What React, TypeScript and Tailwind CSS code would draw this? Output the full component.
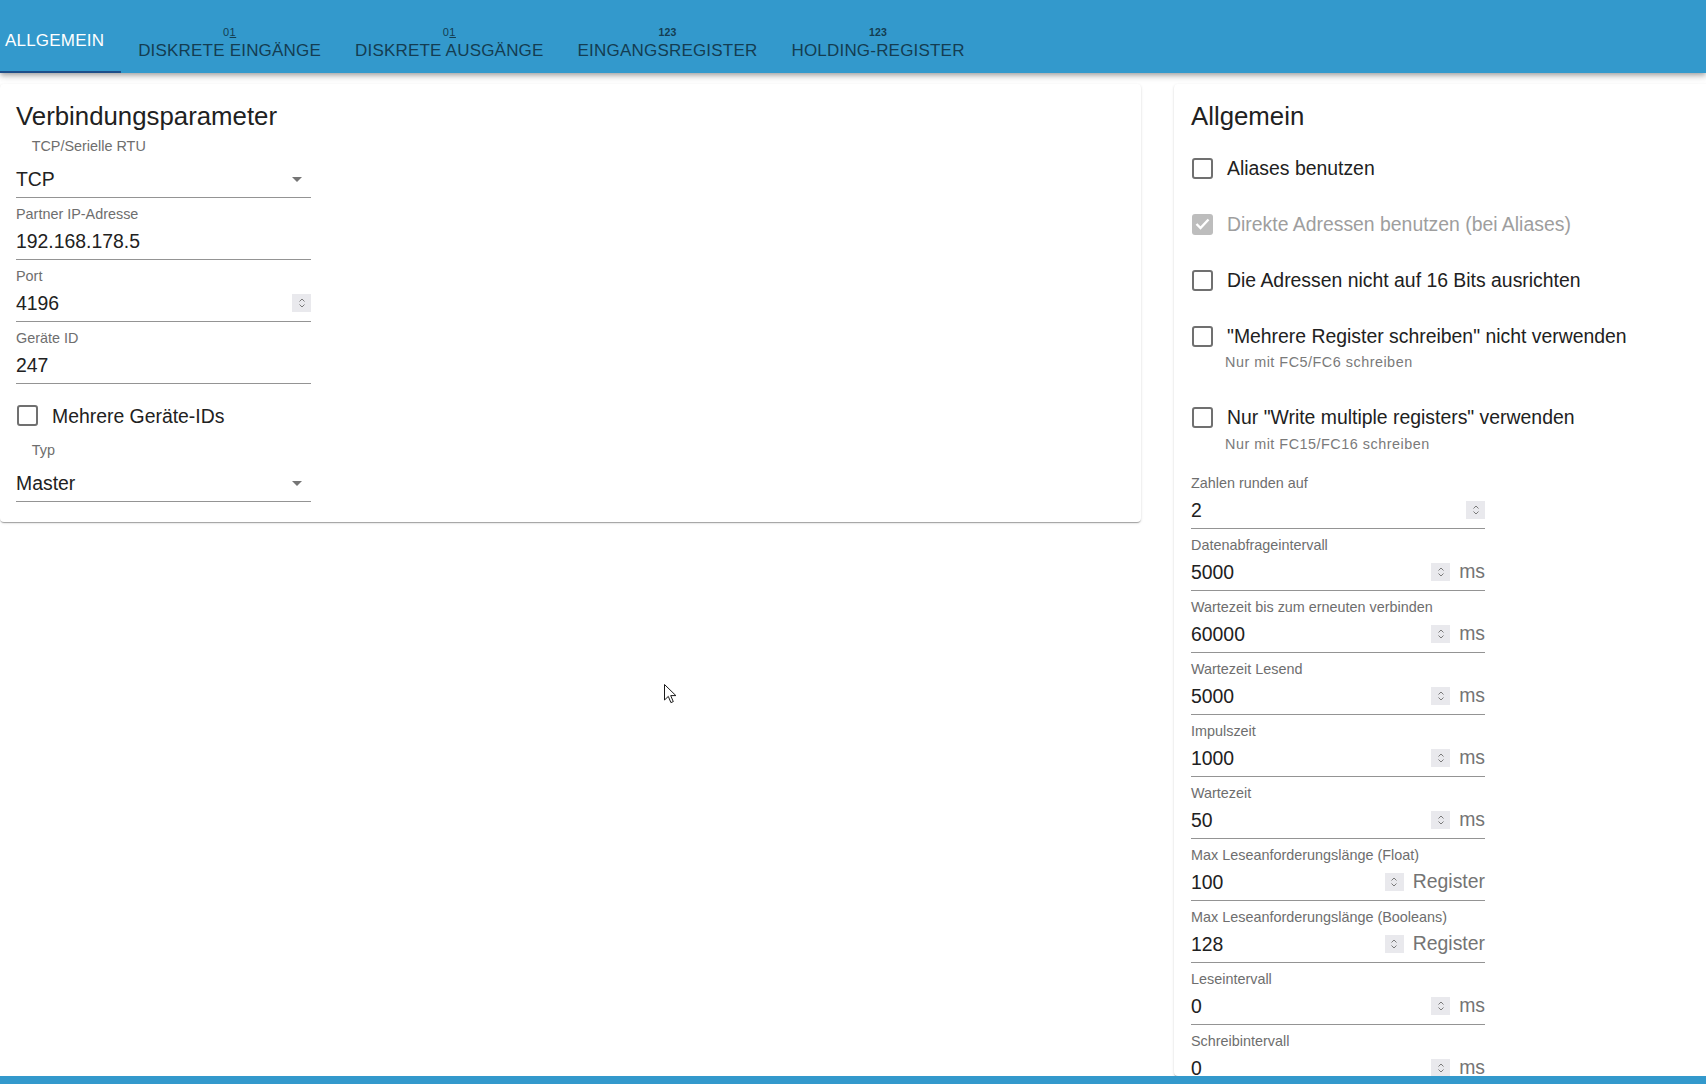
import React from "react";

const tabs = [
  { label: "Allgemein", icon: null },
  { label: "Diskrete Eingänge", icon: "bits" },
  { label: "Diskrete Ausgänge", icon: "bits" },
  { label: "Eingangsregister", icon: "num" },
  { label: "Holding-Register", icon: "num" },
];

const rightFields = [
  { label: "Zahlen runden auf", value: "2", unit: "" },
  { label: "Datenabfrageintervall", value: "5000", unit: "ms" },
  { label: "Wartezeit bis zum erneuten verbinden", value: "60000", unit: "ms" },
  { label: "Wartezeit Lesend", value: "5000", unit: "ms" },
  { label: "Impulszeit", value: "1000", unit: "ms" },
  { label: "Wartezeit", value: "50", unit: "ms" },
  { label: "Max Leseanforderungslänge (Float)", value: "100", unit: "Register" },
  { label: "Max Leseanforderungslänge (Booleans)", value: "128", unit: "Register" },
  { label: "Leseintervall", value: "0", unit: "ms" },
  { label: "Schreibintervall", value: "0", unit: "ms" },
];

const cardShadow =
  "shadow-[0_2px_1px_-1px_rgba(0,0,0,0.2),0_1px_1px_0_rgba(0,0,0,0.14),0_1px_3px_0_rgba(0,0,0,0.12)]";

const Spinner: React.FC = () => (
  <div className="w-[19px] h-[18px] bg-[#e9e9ed] flex items-center justify-center shrink-0">
    <svg width="8" height="12" viewBox="0 0 8 12" fill="none" stroke="#7a7a7a" strokeWidth="1">
      <path d="M1.5 4.5L4 2l2.5 2.5" />
      <path d="M1.5 7.5L4 10l2.5-2.5" />
    </svg>
  </div>
);

const Arrow: React.FC = () => (
  <svg width="10" height="5" viewBox="0 0 10 5" className="mr-[9px] mt-[2px]">
    <path d="M0 0h10L5 5z" fill="#757575" />
  </svg>
);

const Label: React.FC<{ text: string; indent?: boolean }> = ({ text, indent }) => (
  <div
    className={`h-[17px] leading-[17px] text-[14.4px] text-[#6e6e6e] whitespace-nowrap ${
      indent ? "pl-[15.7px]" : ""
    }`}
  >
    {text}
  </div>
);

const TextField: React.FC<{ label: string; value: string; spinner?: boolean; unit?: string }> = ({
  label,
  value,
  spinner,
  unit,
}) => (
  <div className="pt-[8px]">
    <Label text={label} />
    <div className="h-[37px] flex items-center border-b border-[#949494]">
      <div className="flex-1 text-[19.4px] leading-[36px] text-[#212121]">{value}</div>
      {spinner && <Spinner />}
      {unit && <div className="ml-[9px] text-[19.4px] text-[#747474]">{unit}</div>}
    </div>
  </div>
);

const SelectField: React.FC<{ label: string; value: string; className?: string }> = ({
  label,
  value,
  className,
}) => (
  <div className={className}>
    <Label text={label} indent />
    <div className="mt-[6px] h-[37px] flex items-center border-b border-[#949494]">
      <div className="flex-1 text-[19.4px] leading-[36px] text-[#212121]">{value}</div>
      <Arrow />
    </div>
  </div>
);

const Checkbox: React.FC<{ label: string; disabled?: boolean; className?: string }> = ({
  label,
  disabled,
  className,
}) => (
  <div className={`h-[28px] flex items-center ${className ?? ""}`}>
    {disabled ? (
      <div className="ml-[1px] w-[21px] h-[21px] rounded-[3px] bg-[#bdbdbd] flex items-center justify-center">
        <svg width="15" height="12" viewBox="0 0 15 12" fill="none" stroke="#fff" strokeWidth="2.4">
          <path d="M1.5 6l4 4 8-8.5" />
        </svg>
      </div>
    ) : (
      <div className="ml-[1px] w-[21px] h-[21px] rounded-[3px] border-[2.4px] border-[#707070]" />
    )}
    <span
      className={`ml-[14px] text-[19.4px] leading-[22px] whitespace-nowrap ${
        disabled ? "text-[#9e9e9e]" : "text-[#212121]"
      }`}
    >
      {label}
    </span>
  </div>
);

const Helper: React.FC<{ text: string; className?: string }> = ({ text, className }) => (
  <div
    className={`ml-[34px] h-[17px] leading-[17px] text-[14.4px] tracking-[0.5px] text-[#7a7a7a] ${
      className ?? ""
    }`}
  >
    {text}
  </div>
);

const TabIcon: React.FC<{ kind: string }> = ({ kind }) =>
  kind === "bits" ? (
    <div className="h-[10px] leading-[10px] text-[11px] tracking-[0.5px]">
      0<span className="underline underline-offset-[1px]">1</span>
    </div>
  ) : (
    <div className="h-[10px] leading-[10px] text-[10.5px] font-bold">123</div>
  );

export default function App() {
  return (
    <div className="relative h-screen w-full overflow-hidden flex flex-col bg-white font-['Liberation_Sans',Arial,sans-serif]">
      <header className="relative z-10 h-[73px] shrink-0 bg-[#3399cc] shadow-[0_2px_4px_-1px_rgba(0,0,0,0.2),0_4px_5px_0_rgba(0,0,0,0.14),0_1px_10px_0_rgba(0,0,0,0.12)]">
        <div className="h-[8px]" />
        <nav className="flex h-[65px]">
          {tabs.map((t, i) => (
            <div
              key={t.label}
              className={`relative h-full flex flex-col items-center justify-center uppercase text-[17px] tracking-[0.2px] ${
                i === 0 ? "pl-[5px] pr-[17px] text-white" : "px-[17px] pt-[6px] text-[#143d52]"
              }`}
            >
              {t.icon && <TabIcon kind={t.icon} />}
              <div className={`leading-[20px] ${t.icon ? "mt-[4px]" : ""}`}>{t.label}</div>
              {i === 0 && <div className="absolute left-0 right-0 bottom-0 h-[2px] bg-[#1d4e89]" />}
            </div>
          ))}
        </nav>
      </header>

      <main className="flex-1 min-h-0 flex gap-[33px] pt-[11px] overflow-hidden">
        <section className={`w-[1141px] shrink-0 self-start bg-white rounded-[4px] ${cardShadow} px-[16px] pt-[17px] pb-[20px]`}>
          <h2 className="text-[25.8px] leading-[30px] text-[#212121]">Verbindungsparameter</h2>
          <div className="w-[295px]">
            <SelectField label="TCP/Serielle RTU" value="TCP" className="mt-[6.5px]" />
            <TextField label="Partner IP-Adresse" value="192.168.178.5" />
            <TextField label="Port" value="4196" spinner />
            <TextField label="Geräte ID" value="247" />
            <Checkbox label="Mehrere Geräte-IDs" className="mt-[18px]" />
            <SelectField label="Typ" value="Master" className="mt-[12px]" />
          </div>
        </section>

        <section className={`w-[620px] shrink-0 bg-white rounded-[4px] ${cardShadow} pl-[17px] pt-[17px]`}>
          <h2 className="text-[25.8px] leading-[30px] text-[#212121]">Allgemein</h2>
          <Checkbox label="Aliases benutzen" className="mt-[23px]" />
          <Checkbox label="Direkte Adressen benutzen (bei Aliases)" disabled className="mt-[28px]" />
          <Checkbox label="Die Adressen nicht auf 16 Bits ausrichten" className="mt-[28px]" />
          <Checkbox label={'"Mehrere Register schreiben" nicht verwenden'} className="mt-[28px]" />
          <Helper text="Nur mit FC5/FC6 schreiben" className="mt-[4px]" />
          <Checkbox label={'Nur "Write multiple registers" verwenden'} className="mt-[32px]" />
          <Helper text="Nur mit FC15/FC16 schreiben" className="mt-[4.5px]" />
          <div className="mt-[14px] w-[294px]">
            {rightFields.map((f) => (
              <TextField key={f.label} label={f.label} value={f.value} spinner unit={f.unit} />
            ))}
          </div>
        </section>
      </main>

      <footer className="h-[8px] shrink-0 bg-[#3399cc]" />

      <svg
        className="absolute left-[664px] top-[684px] pointer-events-none"
        width="13"
        height="20"
        viewBox="0 0 13 20"
      >
        <path
          d="M0.5 0.5v15.5l3.8-3.6 2.6 6.2 2.4-1-2.6-6h5.2z"
          fill="#fff"
          stroke="#1a1a1a"
          strokeWidth="1"
          strokeLinejoin="round"
        />
      </svg>
    </div>
  );
}
